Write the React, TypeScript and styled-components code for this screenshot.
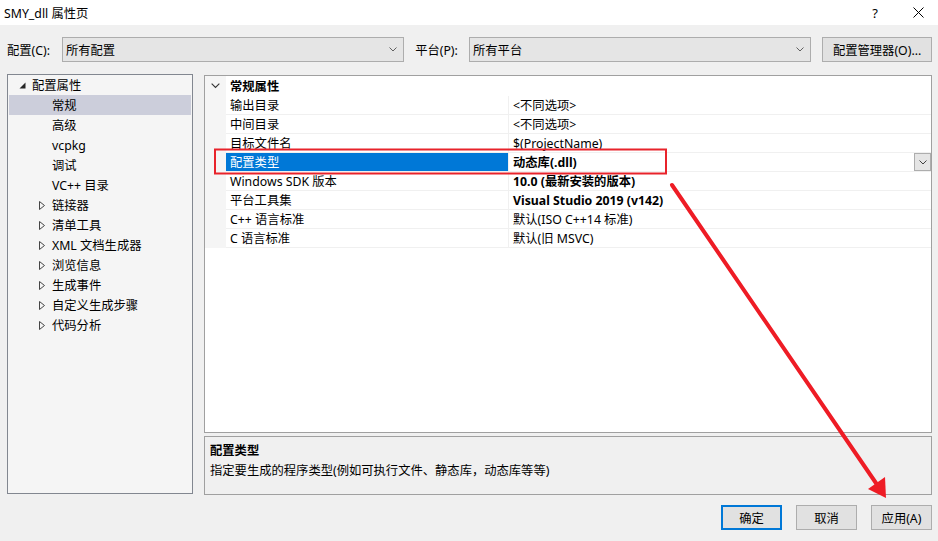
import React from "react";
import styled, { createGlobalStyle } from "styled-components";

const Global = createGlobalStyle`
  html, body { margin: 0; padding: 0; }
  body {
    font-family: "Noto Sans", "Noto Sans CJK SC", sans-serif;
    font-size: 12.3px;
    color: #000;
  }
`;

const Window = styled.div`
  position: relative;
  width: 938px;
  height: 541px;
  background: #f0f0f0;
  display: flex;
  flex-direction: column;
  overflow: hidden;
`;

const TitleBar = styled.div`
  height: 25px;
  background: #fff;
  display: flex;
  align-items: center;
  padding-left: 4px;
`;

const Title = styled.div`
  flex: 1;
`;

const TitleButton = styled.div<{ $w: number }>`
  width: ${(p) => p.$w}px;
  height: 25px;
  display: flex;
  align-items: center;
  justify-content: center;
  font-size: 13px;
`;

const Toolbar = styled.div`
  display: flex;
  align-items: center;
  padding: 12px 6px 0 7px;
  height: 25px;
`;

const Label = styled.span<{ $w: number; $gap?: number }>`
  width: ${(p) => p.$w}px;
  padding-left: ${(p) => p.$gap ?? 0}px;
`;

const Combo = styled.div<{ $w: number }>`
  box-sizing: border-box;
  width: ${(p) => p.$w}px;
  height: 25px;
  background: #e5e5e5;
  border: 1px solid #adadad;
  display: flex;
  align-items: center;
  padding-left: 3px;
  padding-right: 6px;
`;

const ComboText = styled.span`
  flex: 1;
`;

const Spacer = styled.span<{ $w: number }>`
  width: ${(p) => p.$w}px;
`;

const Button = styled.div<{ $primary?: boolean; $w: number }>`
  box-sizing: border-box;
  width: ${(p) => p.$w}px;
  height: 25px;
  background: #e1e1e1;
  border: ${(p) => (p.$primary ? "2px solid #0078d7" : "1px solid #adadad")};
  display: flex;
  align-items: center;
  justify-content: center;
`;

const Body = styled.div`
  display: flex;
  padding: 13px 6px 0 7px;
  gap: 11px;
  height: 421px;
`;

const Tree = styled.div`
  box-sizing: border-box;
  width: 186px;
  height: 420px;
  margin-top: -1px;
  border: 1px solid #828790;
  background: #f5f5f5;
  padding: 0 1px;
`;

const TreeRow = styled.div<{ $indent: number; $selected?: boolean }>`
  height: 20px;
  display: flex;
  align-items: center;
  padding-left: ${(p) => p.$indent}px;
  background: ${(p) => (p.$selected ? "#cccedb" : "transparent")};
`;

const Twisty = styled.span`
  width: 13px;
  display: flex;
  align-items: center;
`;

const RightCol = styled.div`
  flex: 1;
  display: flex;
  flex-direction: column;
  gap: 3px;
`;

const Grid = styled.div`
  box-sizing: border-box;
  height: 358px;
  border: 1px solid #a0a0a0;
  background: #fff;
`;

const GridRow = styled.div<{ $header?: boolean }>`
  display: flex;
  height: ${(p) => (p.$header ? 20 : 19)}px;
`;

const Strip = styled.div`
  width: 21px;
  background: #f5f5f5;
  display: flex;
  align-items: center;
  justify-content: center;
`;

const NameCell = styled.div<{ $selected?: boolean; $header?: boolean }>`
  box-sizing: border-box;
  width: ${(p) => (p.$header ? "auto" : "283px")};
  flex: ${(p) => (p.$header ? 1 : "none")};
  padding-left: 4px;
  display: flex;
  align-items: center;
  font-weight: ${(p) => (p.$header ? 700 : 400)};
  background: ${(p) => (p.$selected ? "#0078d7" : "transparent")};
  color: ${(p) => (p.$selected ? "#fff" : "#000")};
  border-bottom: ${(p) => (p.$header ? "none" : "1px solid #f0f0f0")};
  border-right: ${(p) => (p.$header ? "none" : "1px solid #f0f0f0")};
`;

const ValueCell = styled.div<{ $bold?: boolean }>`
  box-sizing: border-box;
  flex: 1;
  padding-left: 4px;
  display: flex;
  align-items: center;
  font-weight: ${(p) => (p.$bold ? 700 : 400)};
  border-bottom: 1px solid #f0f0f0;
`;

const ValueText = styled.span`
  flex: 1;
`;

const DropButton = styled.div`
  box-sizing: border-box;
  width: 17px;
  height: 18px;
  background: #e5e5e5;
  border: 1px solid #adadad;
  display: flex;
  align-items: center;
  justify-content: center;
`;

const Desc = styled.div`
  box-sizing: border-box;
  height: 59px;
  border: 1px solid #a0a0a0;
  background: #f0f0f0;
  padding: 4px 5px;
  display: flex;
  flex-direction: column;
  gap: 2px;
`;

const DescTitle = styled.div`
  font-weight: 700;
`;

const Footer = styled.div`
  display: flex;
  justify-content: flex-end;
  gap: 14px;
  padding: 9px 6px 0 0;
`;

const Overlay = styled.svg`
  position: absolute;
  left: 0;
  top: 0;
  pointer-events: none;
`;

const Chevron = ({ size = 8, color = "#606060" }: { size?: number; color?: string }) => (
  <svg width={size} height={size / 2 + 1} viewBox="0 0 8 5">
    <path d="M0.5 0.5 L4 4 L7.5 0.5" fill="none" stroke={color} strokeWidth="1" />
  </svg>
);

const treeItems: { text: string; level: number; kind: "open" | "closed" | "leaf"; selected?: boolean }[] = [
  { text: "配置属性", level: 0, kind: "open" },
  { text: "常规", level: 1, kind: "leaf", selected: true },
  { text: "高级", level: 1, kind: "leaf" },
  { text: "vcpkg", level: 1, kind: "leaf" },
  { text: "调试", level: 1, kind: "leaf" },
  { text: "VC++ 目录", level: 1, kind: "leaf" },
  { text: "链接器", level: 1, kind: "closed" },
  { text: "清单工具", level: 1, kind: "closed" },
  { text: "XML 文档生成器", level: 1, kind: "closed" },
  { text: "浏览信息", level: 1, kind: "closed" },
  { text: "生成事件", level: 1, kind: "closed" },
  { text: "自定义生成步骤", level: 1, kind: "closed" },
  { text: "代码分析", level: 1, kind: "closed" },
];

const props: { name: string; value: string; bold?: boolean; selected?: boolean }[] = [
  { name: "输出目录", value: "<不同选项>" },
  { name: "中间目录", value: "<不同选项>" },
  { name: "目标文件名", value: "$(ProjectName)" },
  { name: "配置类型", value: "动态库(.dll)", bold: true, selected: true },
  { name: "Windows SDK 版本", value: "10.0 (最新安装的版本)", bold: true },
  { name: "平台工具集", value: "Visual Studio 2019 (v142)", bold: true },
  { name: "C++ 语言标准", value: "默认(ISO C++14 标准)" },
  { name: "C 语言标准", value: "默认(旧 MSVC)" },
];

export default function App() {
  return (
    <Window>
      <Global />
      <TitleBar>
        <Title>SMY_dll 属性页</Title>
        <TitleButton $w={46}>?</TitleButton>
        <TitleButton $w={40}>
          <svg width="11" height="11" viewBox="0 0 11 11">
            <path d="M0.5 0.5 L10.5 10.5 M10.5 0.5 L0.5 10.5" stroke="#000" strokeWidth="1" />
          </svg>
        </TitleButton>
      </TitleBar>

      <Toolbar>
        <Label $w={55}>配置(C):</Label>
        <Combo $w={343}>
          <ComboText>所有配置</ComboText>
          <Chevron />
        </Combo>
        <Label $w={54} $gap={11}>平台(P):</Label>
        <Combo $w={343}>
          <ComboText>所有平台</ComboText>
          <Chevron />
        </Combo>
        <Spacer $w={11} />
        <Button $w={110}>配置管理器(O)...</Button>
      </Toolbar>

      <Body>
        <Tree>
          {treeItems.map((t) => (
            <TreeRow key={t.text} $indent={t.level === 0 ? 10 : t.kind === "leaf" ? 43 : 30} $selected={t.selected}>
              {t.kind !== "leaf" && (
                <Twisty>
                  {t.kind === "open" ? (
                    <svg width="7" height="7" viewBox="0 0 7 7">
                      <path d="M6.5 0.5 L6.5 6.5 L0.5 6.5 Z" fill="#262626" />
                    </svg>
                  ) : (
                    <svg width="6" height="9" viewBox="0 0 6 9">
                      <path d="M0.5 0.5 L5.5 4.5 L0.5 8.5 Z" fill="none" stroke="#444" strokeWidth="1" />
                    </svg>
                  )}
                </Twisty>
              )}
              <span>{t.text}</span>
            </TreeRow>
          ))}
        </Tree>

        <RightCol>
          <Grid>
            <GridRow $header>
              <Strip>
                <Chevron size={9} color="#333" />
              </Strip>
              <NameCell $header>常规属性</NameCell>
            </GridRow>
            {props.map((p) => (
              <GridRow key={p.name}>
                <Strip />
                <NameCell $selected={p.selected}>{p.name}</NameCell>
                <ValueCell $bold={p.bold}>
                  <ValueText>{p.value}</ValueText>
                  {p.selected && (
                    <DropButton>
                      <Chevron size={8} color="#404040" />
                    </DropButton>
                  )}
                </ValueCell>
              </GridRow>
            ))}
          </Grid>
          <Desc>
            <DescTitle>配置类型</DescTitle>
            <div>指定要生成的程序类型(例如可执行文件、静态库，动态库等等)</div>
          </Desc>
        </RightCol>
      </Body>

      <Footer>
        <Button $w={61} $primary>确定</Button>
        <Button $w={61}>取消</Button>
        <Button $w={61}>应用(A)</Button>
      </Footer>

      <Overlay width="938" height="541" viewBox="0 0 938 541">
        <rect x="215" y="149.5" width="451" height="24" fill="none" stroke="#e8232b" strokeWidth="2" />
        <line x1="672" y1="185" x2="878" y2="486" stroke="#ee1c25" strokeWidth="4" strokeLinecap="round" />
        <path d="M886 498 L868 489 L885 477 Z" fill="#ee1c25" />
      </Overlay>
    </Window>
  );
}
